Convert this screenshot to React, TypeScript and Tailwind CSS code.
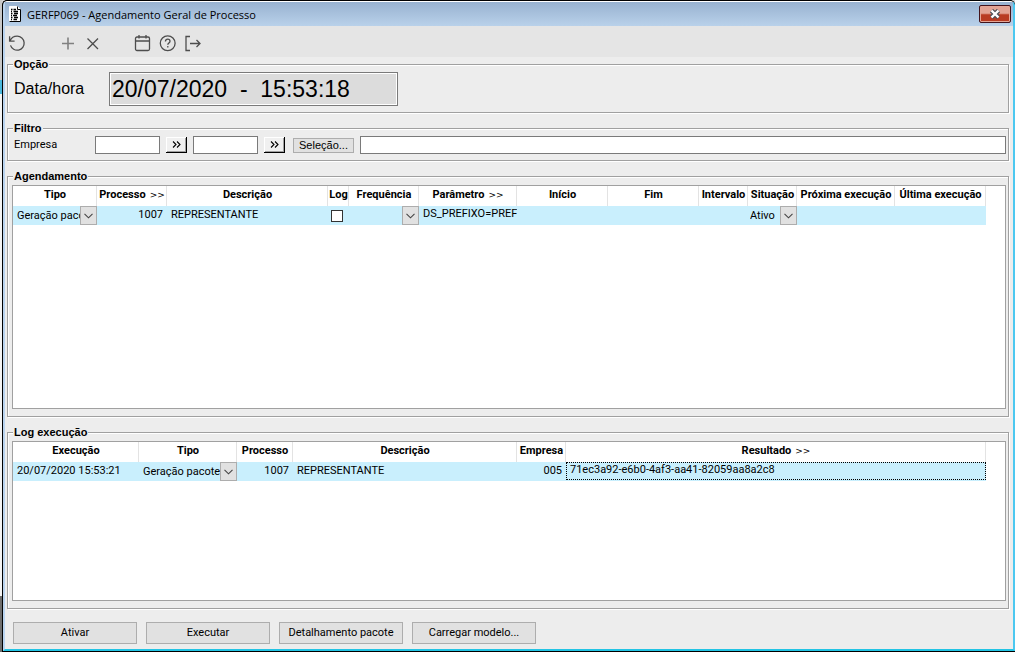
import React, { useState } from "react";

type Column = {
  label: string;
  width: number;
  drill?: boolean;
};

const SCHEDULE_COLUMNS: Column[] = [
  { label: "Tipo", width: 84 },
  { label: "Processo", width: 70, drill: true },
  { label: "Descrição", width: 161 },
  { label: "Log", width: 21 },
  { label: "Frequência", width: 70 },
  { label: "Parâmetro", width: 98, drill: true },
  { label: "Início", width: 91 },
  { label: "Fim", width: 91 },
  { label: "Intervalo", width: 49 },
  { label: "Situação", width: 49 },
  { label: "Próxima execução", width: 98 },
  { label: "Última execução", width: 91 },
];

const LOG_COLUMNS: Column[] = [
  { label: "Execução", width: 126 },
  { label: "Tipo", width: 98 },
  { label: "Processo", width: 56 },
  { label: "Descrição", width: 224 },
  { label: "Empresa", width: 49 },
  { label: "Resultado", width: 420, drill: true },
];

const ACTIONS = ["Ativar", "Executar", "Detalhamento pacote", "Carregar modelo..."];

function ToolButton({ label, children }: { label: string; children: React.ReactNode }) {
  return (
    <button type="button" aria-label={label} className="flex h-full w-[25px] items-center justify-center">
      <svg width="19" height="19" viewBox="0 0 19 19" fill="none" stroke="#4d4d4d" strokeWidth="1.3">
        {children}
      </svg>
    </button>
  );
}

function Toolbar() {
  return (
    <div className="flex h-[31px] items-center bg-[#e5e5e5] pb-px pt-1">
      <ToolButton label="Atualizar">
        <path d="M1.6 2.2v5h5M2 7C3.200 4 6 2.200 9.200 2.200a7 7 0 1 1-6.700 9.200" />
      </ToolButton>
      <div className="w-[25px]" />
      <ToolButton label="Incluir">
        <path d="M10 3.500v12M4 9.500h12" stroke="#808080" strokeWidth="1.6" />
      </ToolButton>
      <ToolButton label="Excluir">
        <path d="M4.500 4.500l10.500 10.500M15 4.500L4.500 15" />
      </ToolButton>
      <div className="w-[25px]" />
      <ToolButton label="Agenda">
        <rect x="2.500" y="3" width="14" height="13.500" rx="1.500" />
        <path d="M2.500 7h14M6 1v3.500M13 1v3.500" />
      </ToolButton>
      <ToolButton label="Ajuda">
        <circle cx="9.700" cy="9.300" r="7.400" />
        <path d="M7.400 7.500c.1-1.500 1-2.300 2.300-2.300s2.300.8 2.300 2c0 1.700-2.200 1.700-2.200 3.500M9.800 12.100v1.500" />
      </ToolButton>
      <ToolButton label="Sair">
        <path d="M7 2.500H3v14h4M7 9.500h10M13.500 6l3.500 3.500-3.500 3.500" />
      </ToolButton>
    </div>
  );
}

function Group({ title, className, children }: { title: string; className: string; children: React.ReactNode }) {
  return (
    <fieldset
      className={`min-w-0 border border-[#a0a0a0] pl-1 pr-0.5 shadow-[1px_1px_0_#fff,inset_1px_1px_0_#fff] ${className}`}
    >
      <legend className="relative ml-px h-3.5 bg-[#ededed] px-px text-[11px] font-bold leading-[14px]">{title}</legend>
      {children}
    </fieldset>
  );
}

function LookupButton({ label }: { label: string }) {
  return (
    <button
      type="button"
      aria-label={label}
      className="flex h-4 w-[21px] shrink-0 items-center justify-center border-b border-r border-black bg-[#f0f0f0] shadow-[inset_1px_1px_0_#fff,inset_-1px_-1px_0_#a0a0a0]"
    >
      <svg width="9" height="7" viewBox="0 0 9 7" fill="none" stroke="#000" strokeWidth="1.1">
        <path d="M1 .5l3 3-3 3M5 .5l3 3-3 3" />
      </svg>
    </button>
  );
}

function CellSelect({ label, value, pad = "pl-1" }: { label: string; value: string; pad?: string }) {
  return (
    <div className="relative h-[19px] overflow-hidden">
      <select aria-label={label} className={`h-[19px] w-full appearance-none bg-transparent pr-[17px] text-[11px] leading-[19px] ${pad}`}>
        <option>{value}</option>
      </select>
      <span className="pointer-events-none absolute right-0 top-0 flex h-[19px] w-[17px] items-center justify-center border border-[#adadad] bg-[#e1e1e1]">
        <svg width="9" height="6" viewBox="0 0 9 6" fill="none" stroke="#444" strokeWidth="1.1">
          <path d="M.5 .8l4 4 4-4" />
        </svg>
      </span>
    </div>
  );
}

function Grid({ columns, width, className, children }: { columns: Column[]; width: string; className: string; children: React.ReactNode }) {
  return (
    <div className={`overflow-hidden border border-[#a0a0a0] bg-white ${className}`}>
      <table className={`table-fixed border-collapse font-['Roboto','Liberation_Sans',sans-serif] text-[11px] ${width}`}>
        <colgroup>
          {columns.map((c) => (
            <col key={c.label} style={{ width: c.width }} />
          ))}
        </colgroup>
        <thead>
          <tr className="h-5">
            {columns.map((c) => (
              <th key={c.label} className="whitespace-nowrap p-0 pb-0.5 text-center font-bold leading-4 shadow-[inset_-1px_0_0_#e3e3e3]">
                {c.label}
                {c.drill && <span className="ml-1 font-['DejaVu_Sans',sans-serif] text-[9px] font-normal leading-none">&gt;&gt;</span>}
              </th>
            ))}
          </tr>
        </thead>
        <tbody>{children}</tbody>
      </table>
    </div>
  );
}

export default function App() {
  const [from, setFrom] = useState("");
  const [to, setTo] = useState("");
  const [selection, setSelection] = useState("");
  const [log, setLog] = useState(false);

  const textBox = "h-[18px] border border-[#7a7a7a] bg-white px-1 text-[11px] outline-none";

  return (
    <div className="flex min-h-screen bg-[#d5d5d5] font-['Liberation_Sans',Arial,sans-serif] text-[11px] text-black">
      {/* Edge of the window underneath */}
      <div className="flex w-0.5 flex-col">
        <div className="h-20 bg-[#c8c8c8]" />
        <div className="h-3.5 bg-[#4ab8dc]" />
        <div className="flex-1 bg-[#f4f4f4]" />
        <div className="h-14 bg-[#6e6e6e]" />
      </div>

      <main className="flex min-w-0 flex-1 flex-col overflow-hidden rounded-t-[5px] border-b border-l border-t border-black bg-black">
        <div className="flex flex-1 flex-col rounded-t-[4px] border-x-2 border-b-2 border-t border-b-[#22c4e4] border-l-[#b9d3ee] border-r-[#4cc8f0] border-t-white bg-[#ededed]">
          <header className="flex h-6 items-center bg-linear-to-b from-[#98b2d0] to-[#b9d1ea] pl-1 pr-0.5">
            <svg width="12" height="16" viewBox="0 0 12 16" className="shrink-0">
              <path d="M.5 .5h8l3 3v12H.5z" fill="#fff" stroke="#fff" />
              <path d="M8.500 .5v3h3M11.500 3.500v12H.5" fill="none" stroke="#000" />
              <path d="M2 3.500h1.500M4.500 3.500h2.500M2 5.500h1M4.500 5.500h4.500M2 7.500h1.500M5 7.500h4M2 9.500h1M4 9.500h4M2 11.500h1.500M5 11.500h4M2 13.500h1M4.500 13.500h3.500" stroke="#000" strokeWidth="1.3" />
            </svg>
            <h1 className="ml-1.5 flex-1 pt-0.5 font-['Open_Sans','Noto_Sans',sans-serif] text-[11px] leading-4">
              GERFP069 - Agendamento Geral de Processo
            </h1>
            <button
              type="button"
              aria-label="Fechar"
              className="flex h-[18px] w-8 items-center justify-center rounded-[2px] border border-[#43141c] bg-linear-to-b from-[#e3a394] from-45% to-[#b93b22] to-55% shadow-[inset_0_0_0_1px_#e5a595]"
            >
              <svg width="12" height="10" viewBox="0 0 12 10" fill="none">
                <path d="M2.500 1.500l7 7M9.500 1.500l-7 7" stroke="#4d5158" strokeWidth="4.600" />
                <path d="M2.500 1.500l7 7M9.500 1.500l-7 7" stroke="#fff" strokeWidth="2.400" />
              </svg>
            </button>
          </header>

          <Toolbar />

          <div className="flex flex-1 flex-col gap-2 pl-0.5 pr-1">
            <Group title="Opção" className="pb-1.5 pt-px">
              <div className="flex items-center">
                <label htmlFor="now" className="w-[97px] pl-0.5 text-[16px]">
                  Data/hora
                </label>
                <input
                  id="now"
                  readOnly
                  value={"20/07/2020\u00a0 -\u00a0 15:53:18"}
                  className="h-[34px] w-[289px] border border-[#7a7a7a] bg-[#dcdcdc] px-0.5 text-[23px] shadow-[inset_0_0_0_1px_#fff] outline-none"
                />
              </div>
            </Group>

            <Group title="Filtro" className="pb-1.5 pt-px">
              <div className="flex items-center gap-1.5">
                <label htmlFor="from" className="w-[77px] shrink-0 pl-0.5 font-['Roboto','Liberation_Sans',sans-serif]">
                  Empresa
                </label>
                <input id="from" value={from} onChange={(e) => setFrom(e.target.value)} className={`w-[65px] ${textBox}`} />
                <LookupButton label="Buscar empresa inicial" />
                <input aria-label="Empresa final" value={to} onChange={(e) => setTo(e.target.value)} className={`w-[65px] ${textBox}`} />
                <LookupButton label="Buscar empresa final" />
                <button type="button" className="ml-0.5 h-[15px] w-[61px] shrink-0 border border-[#adadad] bg-[#e1e1e1] leading-[13px]">
                  Seleção...
                </button>
                <input aria-label="Seleção" value={selection} onChange={(e) => setSelection(e.target.value)} className={`min-w-0 flex-1 ${textBox}`} />
              </div>
            </Group>

            <Group title="Agendamento" className="pb-[7px] pt-0.5">
              <Grid columns={SCHEDULE_COLUMNS} width="w-[973px]" className="h-56">
                <tr className="h-[19px] bg-[#c9effd] leading-[17px]">
                  <td className="p-0">
                    <CellSelect label="Tipo" value="Geração pacote" />
                  </td>
                  <td className="p-0 pr-1 text-right align-top">1007</td>
                  <td className="p-0 pl-1 align-top">REPRESENTANTE</td>
                  <td className="p-0">
                    <input
                      type="checkbox"
                      aria-label="Log"
                      checked={log}
                      onChange={(e) => setLog(e.target.checked)}
                      className="ml-[3px] block size-3 appearance-none border border-[#333] bg-white checked:bg-[#333]"
                    />
                  </td>
                  <td className="p-0">
                    <CellSelect label="Frequência" value="" />
                  </td>
                  <td className="overflow-hidden whitespace-nowrap p-0 pl-1 align-top leading-[15px]">DS_PREFIXO=PREFI</td>
                  <td className="p-0" />
                  <td className="p-0" />
                  <td className="p-0" />
                  <td className="p-0">
                    <CellSelect label="Situação" value="Ativo" pad="pl-0.5" />
                  </td>
                  <td className="p-0" />
                  <td className="p-0" />
                </tr>
              </Grid>
            </Group>

            <Group title="Log execução" className="pb-[7px] pt-0.5">
              <Grid columns={LOG_COLUMNS} width="w-[973px]" className="h-40">
                <tr className="h-[19px] bg-[#c9effd] leading-[17px]">
                  <td className="p-0 pl-1 align-top">20/07/2020 15:53:21</td>
                  <td className="p-0">
                    <CellSelect label="Tipo do log" value="Geração pacote" />
                  </td>
                  <td className="p-0 pr-1 text-right align-top">1007</td>
                  <td className="p-0 pl-1 align-top">REPRESENTANTE</td>
                  <td className="p-0 pr-1 text-right align-top">005</td>
                  <td className="p-0 align-top">
                    <div className="h-[18px] border border-dotted border-black pl-[3px] leading-[14px]">
                      71ec3a92-e6b0-4af3-aa41-82059aa8a2c8
                    </div>
                  </td>
                </tr>
              </Grid>
            </Group>

            <div className="flex gap-[9px] pb-[5px] pl-1.5 pt-[5px]">
              {ACTIONS.map((action) => (
                <button
                  key={action}
                  type="button"
                  className="h-[22px] w-[124px] border border-[#adadad] bg-[#e1e1e1] font-['Roboto','Liberation_Sans',sans-serif] leading-5 hover:bg-[#e5f1fb]"
                >
                  {action}
                </button>
              ))}
            </div>
          </div>
        </div>
      </main>
    </div>
  );
}
